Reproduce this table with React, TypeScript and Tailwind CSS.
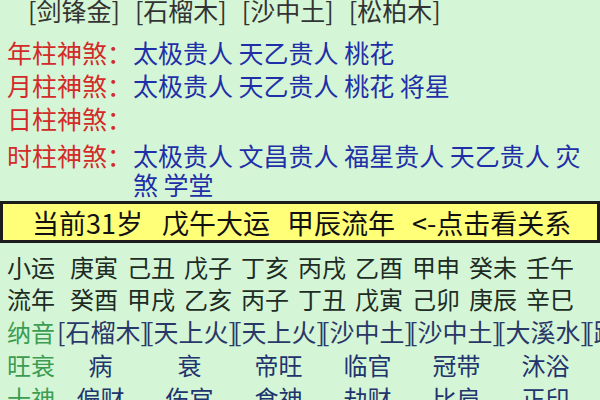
import React from "react";

const F = { fontFamily: '"Noto Sans CJK SC", "Noto Sans", sans-serif' };

function Shensha({ label, text, cls }: { label: string; text: string; cls: string }) {
  return (
    <div className={`flex text-[25px] ${cls}`}>
      <div className="w-[133px] shrink-0 pl-[7px] text-[#d32a2a]">{label}</div>
      <div className="flex-1 text-[#1f2fa8]">{text}</div>
    </div>
  );
}

export default function App() {
  const xiaoyun = ["庚寅", "己丑", "戊子", "丁亥", "丙戌", "乙酉", "甲申", "癸未", "壬午"];
  const liunian = ["癸酉", "甲戌", "乙亥", "丙子", "丁丑", "戊寅", "己卯", "庚辰", "辛巳"];
  const wangshuai = ["病", "衰", "帝旺", "临官", "冠带", "沐浴"];
  const shishen = ["偏财", "伤官", "食神", "劫财", "比肩", "正印"];
  const nayin = ["[石榴木]", "[天上火]", "[天上火]", "[沙中土]", "[沙中土]", "[大溪水]", "[路旁土]"];
  return (
    <div
      style={F}
      className="w-[600px] h-[400px] overflow-hidden bg-[#d5f6d6] text-[24px] leading-[29px]"
    >
      <div className="-mt-[4px] pl-[28px] flex gap-[15px] text-[25px] text-[#333333] whitespace-nowrap">
        <span>[剑锋金]</span>
        <span>[石榴木]</span>
        <span>[沙中土]</span>
        <span>[松柏木]</span>
      </div>
      <Shensha cls="mt-[13px]" label="年柱神煞：" text="太极贵人 天乙贵人 桃花" />
      <Shensha cls="mt-[4px]" label="月柱神煞：" text="太极贵人 天乙贵人 桃花 将星" />
      <Shensha cls="mt-[4px]" label="日柱神煞：" text="" />
      <Shensha cls="mt-[8px]" label="时柱神煞：" text="太极贵人 文昌贵人 福星贵人 天乙贵人 灾煞 学堂" />
      <div className="mt-[2px] h-[42px] border-[3px] border-[#1c1c1c] bg-[#ffff78] pl-[29px] flex items-center text-[27px] text-[#111111] whitespace-nowrap">
        <span>当前31岁</span>
        <span className="ml-[19px]">戊午大运</span>
        <span className="ml-[17px]">甲辰流年</span>
        <span className="ml-[17px]">&lt;-点击看关系</span>
      </div>
      <div className="mt-[9px] flex text-[#1d2c24] whitespace-nowrap">
        <div className="w-[70px] shrink-0 pl-[7px]">小运</div>
        <div className="flex gap-[9px]">
          {xiaoyun.map((x) => (
            <span key={x} className="w-[48px]">{x}</span>
          ))}
        </div>
      </div>
      <div className="mt-[3px] flex text-[#1d2c24] whitespace-nowrap">
        <div className="w-[70px] shrink-0 pl-[7px]">流年</div>
        <div className="flex gap-[9px]">
          {liunian.map((x) => (
            <span key={x} className="w-[48px]">{x}</span>
          ))}
        </div>
      </div>
      <div className="mt-[4px] flex whitespace-nowrap">
        <div className="w-[57px] shrink-0 pl-[7px] text-[#3c9c52]">纳音</div>
        <div className="flex text-[25px] text-[#2a3868]">
          {nayin.map((x, i) => (
            <span key={i} className="w-[88px] shrink-0">{x}</span>
          ))}
        </div>
      </div>
      <div className="mt-[4px] flex whitespace-nowrap">
        <div className="w-[56px] shrink-0 pl-[7px] text-[#3c9c52]">旺衰</div>
        <div className="grid grid-cols-[repeat(6,89px)] text-[#22346e]">
          {wangshuai.map((x) => (
            <span key={x} className="text-center">{x}</span>
          ))}
        </div>
      </div>
      <div className="mt-[4px] flex whitespace-nowrap">
        <div className="w-[56px] shrink-0 pl-[7px] text-[#3c9c52]">十神</div>
        <div className="grid grid-cols-[repeat(6,89px)] text-[#22346e]">
          {shishen.map((x) => (
            <span key={x} className="text-center">{x}</span>
          ))}
        </div>
      </div>
    </div>
  );
}
